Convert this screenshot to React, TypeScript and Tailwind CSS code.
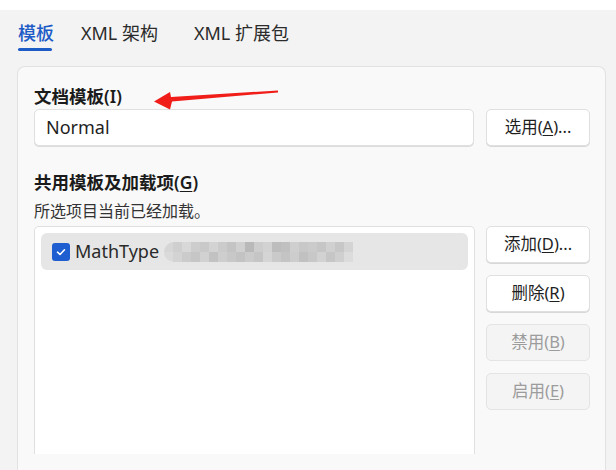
import React from "react";

const pixelRows = [
  ["#d6d6d6", "#cfcfcf", "#d8d8d8", "#cdcdcd", "#c9c9c9", "#d3d3d3", "#cbcbcb", "#c4c4c4", "#d0d0d0", "#b9b9b9", "#cdcdcd", "#d2d2d2", "#bdbdbd", "#c0c0c0", "#cfcfcf", "#c8c8c8", "#cbcbcb", "#c6c6c6", "#d0d0d0", "#c7c7c7", "#d4d4d4"],
  ["#dadada", "#d3d3d3", "#cbcbcb", "#c6c6c6", "#d1d1d1", "#c2c2c2", "#cecece", "#c8c8c8", "#c3c3c3", "#cbcbcb", "#c5c5c5", "#d5d5d5", "#cacaca", "#c4c4c4", "#cdcdcd", "#c1c1c1", "#c8c8c8", "#d2d2d2", "#c6c6c6", "#cfcfcf", "#dcdcdc"],
];

function SideButton({ label, hot, rest, disabled }: { label: string; hot: string; rest: string; disabled?: boolean }) {
  return (
    <button
      className={
        disabled
          ? "h-[37px] w-[104px] rounded-[5px] border border-[#e4e4e4] bg-[#f4f4f4] text-[16.5px] text-[#9c9c9c]"
          : "h-[37px] w-[104px] rounded-[5px] border border-[#e0e0e0] bg-white text-[16.5px] text-[#1f1f1f] shadow-[0_1px_0_#d8d8d8]"
      }
    >
      {label}(<span className="underline underline-offset-2">{hot}</span>){rest}
    </button>
  );
}

export default function App() {
  return (
    <div className="relative h-[470px] w-[616px] overflow-hidden bg-[#f3f3f3] font-['Noto_Sans','Noto_Sans_CJK_SC',sans-serif]">
      {/* top strip */}
      <div className="h-[10px] bg-white" />

      {/* tabs */}
      <div className="flex h-[56px] items-start pl-[18px] pt-[12px] text-[18px]">
        <div className="flex flex-col items-start">
          <span className="font-medium leading-[22px] text-[#1d5bc6]">模板</span>
          <span className="mt-[4px] h-[3px] w-[34px] rounded-full bg-[#1d5bc6]" />
        </div>
        <span className="ml-[27px] leading-[22px] text-[#2b2b2b]">XML 架构</span>
        <span className="ml-[36px] leading-[22px] text-[#2b2b2b]">XML 扩展包</span>
      </div>

      {/* panel */}
      <div className="ml-[17px] mr-[10px] h-[420px] rounded-t-[8px] border border-b-0 border-[#e2e2e2] bg-[#f9f9f9] pl-[16px] pr-[15px] pt-[17px]">
        <div className="text-[17.5px] font-semibold leading-[24px] text-[#1b1b1b]">文档模板(I)</div>
        <div className="mt-[1px] flex gap-[12px]">
          <div className="flex h-[37px] flex-1 items-center rounded-[5px] border border-[#e0e0e0] bg-white px-[11px] text-[18px] text-[#1f1f1f] shadow-[0_1px_0_#dcdcdc]">
            Normal
          </div>
          <SideButton label="选用" hot="A" rest="..." />
        </div>

        <div className="mt-[24px] text-[17.5px] font-semibold leading-[24px] text-[#1b1b1b]">
          共用模板及加载项(<span className="underline underline-offset-2">G</span>)
        </div>
        <div className="mt-[5px] text-[16px] leading-[24px] text-[#333]">所选项目当前已经加载。</div>

        <div className="mt-[3px] flex gap-[11px]">
          <div className="h-[228px] flex-1 rounded-t-[5px] border border-b-0 border-[#e0e0e0] bg-white px-[6px] pt-[6px]">
            <div className="flex h-[37px] items-center rounded-[6px] bg-[#e6e6e6] pl-[11px]">
              <span className="flex h-[18px] w-[18px] items-center justify-center rounded-[3px] bg-[#1e5ed0]">
                <svg width="12" height="12" viewBox="0 0 12 12" fill="none">
                  <path d="M2.5 6.2 L5 8.5 L9.5 3.8" stroke="white" strokeWidth="1.6" strokeLinecap="round" strokeLinejoin="round" />
                </svg>
              </span>
              <span className="ml-[5px] text-[18px] text-[#2a2a2a]">MathType</span>
              <div className="ml-[5px] flex flex-col overflow-hidden rounded-l-full">
                {pixelRows.map((row, r) => (
                  <div key={r} className="flex">
                    {row.map((c, i) => (
                      <span key={i} className="h-[10px] w-[9px]" style={{ backgroundColor: c }} />
                    ))}
                  </div>
                ))}
              </div>
            </div>
          </div>
          <div className="flex flex-col gap-[12px]">
            <SideButton label="添加" hot="D" rest="..." />
            <SideButton label="删除" hot="R" rest="" />
            <SideButton label="禁用" hot="B" rest="" disabled />
            <SideButton label="启用" hot="E" rest="" disabled />
          </div>
        </div>
      </div>

      {/* red annotation arrow */}
      <svg className="absolute left-[150px] top-[85px]" width="132" height="30" viewBox="0 0 132 30">
        <path d="M4,16.5 L20,7 L21,12 L128,5.5 L128,7.5 L22,16.5 L20,24.5 Z" fill="#f01d18" />
      </svg>
    </div>
  );
}
